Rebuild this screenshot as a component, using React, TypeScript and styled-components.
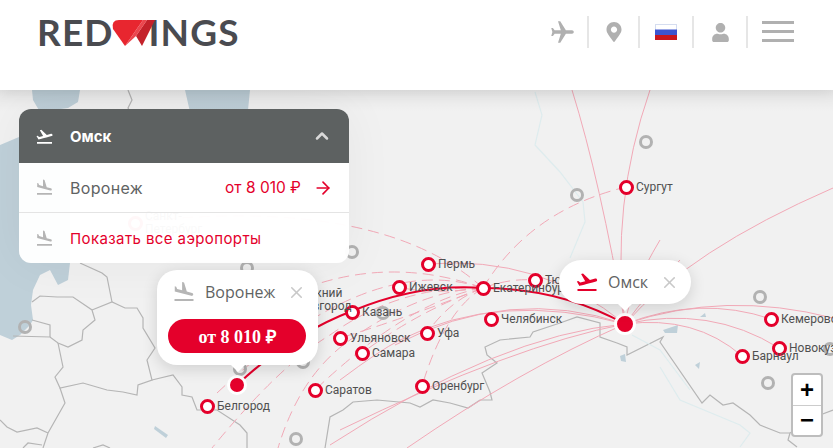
import React from "react";
import styled, { createGlobalStyle } from "styled-components";
import { FaMapMarkerAlt, FaUser } from "react-icons/fa";
import { FiArrowRight, FiChevronUp, FiX } from "react-icons/fi";
import { MdFlight, MdFlightLand, MdFlightTakeoff } from "react-icons/md";

const RED = "#e4002b";
const TOP = 90;

const redPins = [
  { x: 428, y: 264, name: "Пермь" },
  { x: 399, y: 287, name: "Ижевск" },
  { x: 535, y: 280, name: "Тюмень" },
  { x: 483, y: 288, name: "Екатеринбург" },
  { x: 352, y: 312, name: "Казань" },
  { x: 340, y: 338, name: "Ульяновск" },
  { x: 362, y: 353, name: "Самара" },
  { x: 427, y: 333, name: "Уфа" },
  { x: 491, y: 319, name: "Челябинск" },
  { x: 315, y: 390, name: "Саратов" },
  { x: 422, y: 386, name: "Оренбург" },
  { x: 207, y: 406, name: "Белгород" },
  { x: 626, y: 187, name: "Сургут" },
  { x: 771, y: 319, name: "Кемерово" },
  { x: 779, y: 348, name: "Новокузнецк" },
  { x: 742, y: 356, name: "Барнаул" },
  { x: 135, y: 223, name: "Санкт-\nПетербург" },
  { x: 287, y: 300, name: "Нижний\nНовгород" },
];

const grayPins = [
  { x: 646, y: 142 },
  { x: 577, y: 195 },
  { x: 352, y: 252 },
  { x: 247, y: 268 },
  { x: 240, y: 369 },
  { x: 303, y: 362 },
  { x: 383, y: 313 },
  { x: 296, y: 439 },
  { x: 760, y: 297 },
  { x: 768, y: 383 },
  { x: 830, y: 349 },
  { x: 25, y: 327 },
];

const borders = [
  "32,302 40,296 57,297 73,297 92,310 95,320 83,330 82,340 68,347 58,343 50,337 13,336",
  "32,320 50,325 50,337",
  "92,310 112,302 125,308 137,308 143,318 143,328 155,348 147,360 152,380 138,385 137,395 123,392 107,390 83,383 60,388 55,377 63,367 58,343",
  "80,263 102,273 107,277 112,302",
  "152,380 173,375 182,387 182,395 192,397 197,410 217,410 240,425 247,433 247,448",
  "60,388 65,403 48,433 43,448",
  "0,420 7,427 17,432 37,428 48,433",
  "23,448 28,443 42,445",
  "93,448 103,445 110,448",
  "128,90 132,100 128,108 134,118 132,135",
  "325,448 330,417 343,410 353,402 377,400 410,403 420,407 433,400 450,403 468,408 480,400 492,400 490,392 482,373 497,363 487,355 485,347 500,340 530,337 533,332 560,323 577,317 600,323 600,337 617,343 627,347 627,355 663,337 660,342 702,403 710,395 723,405 733,403 750,415 760,425 780,433 790,433 820,415 833,410",
  "790,433 788,440 797,447",
];

const rivers = [
  "535,92 542,115 535,145 560,172 583,202 585,222 570,258",
  "660,367 680,400 740,425 750,433 740,447",
  "632,335 660,350 690,390",
];

const solidRoutes = [
  "M625 324 Q600 180 572 90",
  "M625 324 Q610 205 650 90",
  "M625 324 Q690 250 833 188",
  "M625 324 Q540 255 428 264",
  "M625 324 Q500 290 400 340 Q380 350 340 380",
  "M625 324 Q510 285 395 345",
  "M625 324 Q500 335 330 445",
  "M625 324 Q515 345 340 430",
  "M625 324 Q520 370 407 448",
  "M625 324 Q725 290 833 318",
  "M625 324 Q700 295 771 319",
  "M625 324 Q710 305 779 348",
  "M625 324 Q695 315 742 356",
  "M625 324 Q630 290 660 240",
  "M625 324 Q650 290 680 260",
];

const dashedRoutes = [
  "M483 288 Q530 210 626 187",
  "M483 288 Q380 195 135 222",
  "M483 288 Q370 250 217 393",
  "M483 288 Q400 285 330 335 Q280 365 212 448",
  "M483 288 Q420 290 350 340 Q300 375 278 448",
  "M483 288 Q410 300 315 390",
  "M483 288 Q420 310 362 353",
  "M483 288 Q445 310 422 386",
  "M483 288 Q450 300 427 333",
  "M483 288 Q510 278 535 280",
  "M483 288 Q390 255 300 290",
  "M483 288 Q400 320 340 338",
  "M483 288 Q430 295 399 287",
];

const GlobalStyle = createGlobalStyle`
  html, body {
    margin: 0;
    padding: 0;
    background: #f1f1f1;
    overflow: hidden;
  }
  * {
    box-sizing: border-box;
  }
`;

const Page = styled.div`
  width: 833px;
  height: 448px;
  overflow: hidden;
  position: relative;
  font-family: "Inter", "Liberation Sans", sans-serif;
`;
const Header = styled.header`
  position: relative;
  z-index: 5;
  height: 90px;
  background: #fff;
  box-shadow: 0 0 14px rgba(0, 0, 0, 0.12);
  display: flex;
  justify-content: space-between;
  align-items: flex-start;
  padding: 16px 39px 0 37px;
`;
const Logo = styled.div`
  display: flex;
  align-items: center;
  height: 32px;
  color: #4a4b50;
  font-family: "Lato", sans-serif;
  font-size: 37px;
  font-weight: 700;
  letter-spacing: 1.1px;
  line-height: 32px;
`;
const LogoMark = styled.svg`
  width: 44px;
  height: 28px;
  margin: 1px -6px 0 -3px;
  position: relative;
  z-index: 1;
`;
const Nav = styled.nav`
  display: flex;
  height: 32px;
`;
const NavItem = styled.div<{ $w: number }>`
  width: ${(p) => p.$w}px;
  height: 32px;
  display: flex;
  align-items: center;
  justify-content: center;
  color: #b0b0b0;
  border-right: 2px solid #e6e6e6;
`;
const PlaneIcon = styled(MdFlight)`
  transform: rotate(90deg);
`;
const Burger = styled.div`
  width: 32px;
  margin-left: 14px;
  display: flex;
  flex-direction: column;
  gap: 6px;
  margin-top: 5px;
`;
const BurgerLine = styled.span`
  height: 3px;
  background: #b0b0b0;
`;
const Stage = styled.main`
  position: relative;
  height: 358px;
  background: #f1f1f1;
`;
const MapArt = styled.svg`
  position: absolute;
  inset: 0;
  width: 833px;
  height: 358px;
`;
const Ring = styled.div<{ $gray?: boolean }>`
  position: absolute;
  width: ${(p) => (p.$gray ? 14 : 15)}px;
  height: ${(p) => (p.$gray ? 14 : 15)}px;
  margin: ${(p) => (p.$gray ? "-7px 0 0 -7px" : "-7.5px 0 0 -7.5px")};
  border-radius: 50%;
  background: ${(p) => (p.$gray ? "transparent" : "#fff")};
  border: ${(p) => (p.$gray ? "3.5px solid #b2b2b2" : `3.5px solid ${RED}`)};
`;
const PinName = styled.div`
  position: absolute;
  transform: translateY(-50%);
  margin-left: 10px;
  color: #505050;
  font-family: "Roboto", sans-serif;
  font-size: 12px;
  line-height: 13px;
  white-space: pre;
`;
const Hub = styled.div<{ $size: number }>`
  position: absolute;
  width: ${(p) => p.$size}px;
  height: ${(p) => p.$size}px;
  margin: ${(p) => -p.$size / 2}px 0 0 ${(p) => -p.$size / 2}px;
  border-radius: 50%;
  background: ${RED};
  border: 3px solid #fff;
`;
const Panel = styled.section`
  position: absolute;
  left: 19px;
  top: 19px;
  width: 330px;
  border-radius: 12px;
  overflow: hidden;
  background: rgba(255, 255, 255, 0.97);
  box-shadow: 0 0 50px rgba(0, 0, 0, 0.05);
`;
const PanelHead = styled.div`
  height: 54px;
  display: flex;
  align-items: center;
  padding: 0 17px 0 16px;
  background: #5d6161;
  color: #fff;
  font-size: 15px;
  font-weight: 700;
`;
const PanelRow = styled.div<{ $line?: boolean }>`
  height: 50px;
  display: flex;
  align-items: center;
  padding: 0 16px 0 16px;
  color: #5f6363;
  border-bottom: ${(p) => (p.$line ? "1px solid #e4e4e4" : "none")};
`;
const IconSlot = styled.div<{ $color?: string; $w?: number }>`
  width: ${(p) => p.$w || 35}px;
  display: flex;
  align-items: center;
  flex: none;
  color: ${(p) => p.$color || "#b5b5b5"};
`;
const RowText = styled.span<{ $spaced?: boolean }>`
  flex: 1;
  font-size: ${(p) => (p.$spaced ? 16 : 15)}px;
  letter-spacing: ${(p) => (p.$spaced ? 0.3 : 0)}px;
`;
const ShowAll = styled.span`
  flex: 1;
  color: ${RED};
  font-size: 15px;
  letter-spacing: 0.4px;
`;
const Price = styled.span`
  color: ${RED};
  font-size: 15.5px;
  margin-right: 12px;
`;
const Popup = styled.div`
  position: absolute;
  z-index: 3;
  background: #fff;
  box-shadow: 0 4px 16px rgba(0, 0, 0, 0.14);
  &::after {
    content: "";
    position: absolute;
    left: 50%;
    bottom: -7px;
    margin-left: -7px;
    border-left: 7px solid transparent;
    border-right: 7px solid transparent;
    border-top: 7px solid #fff;
  }
`;
const CityPopup = styled(Popup)`
  left: 157px;
  top: 180px;
  width: 161px;
  height: 95px;
  border-radius: 20px;
  padding: 9px 12px 0 15px;
`;
const HubPopup = styled(Popup)`
  left: 559px;
  top: 170px;
  width: 132px;
  height: 44px;
  border-radius: 22px;
  padding: 0 12px 0 16px;
  display: flex;
  align-items: center;
`;
const PopupHead = styled.div`
  display: flex;
  align-items: center;
  height: 26px;
  margin-bottom: 14px;
`;
const PopupName = styled.span`
  flex: 1;
  color: #5f6363;
  font-family: "Open Sans", sans-serif;
  font-size: 16px;
`;
const Close = styled(FiX)`
  color: #c8c8c8;
  flex: none;
`;
const PriceButton = styled.button`
  display: block;
  width: 138px;
  height: 34px;
  margin-left: -4px;
  border: 0;
  border-radius: 17px;
  background: ${RED};
  color: #fff;
  font-family: "Liberation Serif", serif;
  font-size: 18px;
  font-weight: 700;
  padding: 0;
`;
const Zoom = styled.div`
  position: absolute;
  left: 791px;
  top: 283px;
  width: 32px;
  height: 64px;
  background: #fff;
  border: 2px solid #bdbdbd;
  border-radius: 4px;
  display: flex;
  flex-direction: column;
`;
const ZoomButton = styled.div<{ $line?: boolean }>`
  flex: 1;
  display: flex;
  align-items: center;
  justify-content: center;
  color: #000;
  font-family: "Liberation Sans", sans-serif;
  font-size: 24px;
  font-weight: 700;
  line-height: 1;
  border-bottom: ${(p) => (p.$line ? "1px solid #ccc" : "none")};
`;

export default function App() {
  return (
    <Page>
      <GlobalStyle />
      <Header>
        <Logo>
          RED
          <LogoMark viewBox="0 0 44 28">
            <path d="M8 1 L24 1 L32 1 L14 27 L2 10 Q0 1 8 1Z" fill="#e8262f" />
            <path d="M25 17 L36 1 L44 1 L31 27Z" fill="#c4222b" />
            <path d="M14 27 L32 1 L36 1 L25 17Z" fill="#e8262f" opacity="0.85" />
          </LogoMark>
          INGS
        </Logo>
        <Nav>
          <NavItem $w={52}>
            <PlaneIcon size={27} />
          </NavItem>
          <NavItem $w={51}>
            <FaMapMarkerAlt size={20} />
          </NavItem>
          <NavItem $w={54}>
            <svg width="22" height="16" viewBox="0 0 22 16">
              <rect x="0.5" y="0.5" width="21" height="15" fill="#fff" stroke="#d5ddf0" />
              <rect y="5.5" width="22" height="5.5" fill="#3c55d0" />
              <rect y="11" width="22" height="5" fill="#c8171d" />
            </svg>
          </NavItem>
          <NavItem $w={54}>
            <FaUser size={19} />
          </NavItem>
          <Burger>
            <BurgerLine />
            <BurgerLine />
            <BurgerLine />
          </Burger>
        </Nav>
      </Header>
      <Stage>
        <MapArt viewBox={`0 ${TOP} 833 358`}>
          <defs>
            <linearGradient id="shade" x1="0" y1="0" x2="0" y2="1">
              <stop offset="0" stopColor="#000" stopOpacity="0.05" />
              <stop offset="1" stopColor="#000" stopOpacity="0" />
            </linearGradient>
          </defs>
          <g fill="#bfd0d9">
            <path d="M32 90 L80 90 L78 102 L68 108 L40 112 L33 100Z M185 90 L250 90 L248 110 L190 112Z" />
            <path d="M0 145 L19 137 L70 150 L70 263 L68 280 L58 285 L50 270 L40 275 L33 290 L31 305 L33 320 L30 325 L20 335 L12 340 L0 335Z" />
            <path d="M155 426 L168 435 L166 438 L154 429Z" />
            <path d="M663 330 L678 325 L677 333 L665 333Z" />
            <path d="M620 356 L625 354 L626 362 L621 361Z" />
            <path d="M695 365 L700 362 L699 369 Z" />
            <path d="M700 317 L705 313 L706 317Z" />
          </g>
          <g fill="none" stroke="#b5b5b5" strokeWidth="1.2">
            {borders.map((b) => (
              <polyline key={b} points={b} />
            ))}
          </g>
          <g fill="none" stroke="#deecee" strokeWidth="1.2">
            {rivers.map((b) => (
              <polyline key={b} points={b} />
            ))}
          </g>
          <g fill="none" stroke="#f2a9b7" strokeWidth="1">
            {solidRoutes.map((d) => (
              <path key={d} d={d} />
            ))}
          </g>
          <g fill="none" stroke="#f2a9b7" strokeWidth="1" strokeDasharray="11 6">
            {dashedRoutes.map((d) => (
              <path key={d} d={d} />
            ))}
          </g>
          <path
            d="M237 385 Q290 335 352 311 Q420 283 483 288 Q560 288 625 324"
            fill="none"
            stroke={RED}
            strokeWidth="2"
          />
          <rect x="0" y={TOP} width="833" height="22" fill="url(#shade)" />
        </MapArt>
        {grayPins.map((p) => (
          <Ring key={p.x} $gray style={{ left: p.x, top: p.y - TOP }} />
        ))}
        {redPins.map((p) => (
          <React.Fragment key={p.name}>
            <Ring style={{ left: p.x, top: p.y - TOP }} />
            <PinName style={{ left: p.x, top: p.y - TOP }}>{p.name}</PinName>
          </React.Fragment>
        ))}
        <Hub $size={20} style={{ left: 237, top: 295 }} />
        <Hub $size={22} style={{ left: 625, top: 234 }} />
        <Panel>
          <PanelHead>
            <IconSlot $color="#fff">
              <MdFlightTakeoff size={19} />
            </IconSlot>
            <RowText>Омск</RowText>
            <FiChevronUp size={20} color="#d9d9d9" strokeWidth={3} />
          </PanelHead>
          <PanelRow $line>
            <IconSlot>
              <MdFlightLand size={19} />
            </IconSlot>
            <RowText $spaced>Воронеж</RowText>
            <Price>от 8 010 ₽</Price>
            <FiArrowRight size={20} color={RED} />
          </PanelRow>
          <PanelRow>
            <IconSlot>
              <MdFlightLand size={19} />
            </IconSlot>
            <ShowAll>Показать все аэропорты</ShowAll>
          </PanelRow>
        </Panel>
        <CityPopup>
          <PopupHead>
            <IconSlot $w={33}>
              <MdFlightLand size={24} />
            </IconSlot>
            <PopupName>Воронеж</PopupName>
            <Close size={19} />
          </PopupHead>
          <PriceButton>от 8 010 ₽</PriceButton>
        </CityPopup>
        <HubPopup>
          <IconSlot $color={RED} $w={33}>
            <MdFlightTakeoff size={24} />
          </IconSlot>
          <PopupName>Омск</PopupName>
          <Close size={19} />
        </HubPopup>
        <Zoom>
          <ZoomButton $line>+</ZoomButton>
          <ZoomButton>−</ZoomButton>
        </Zoom>
      </Stage>
    </Page>
  );
}
